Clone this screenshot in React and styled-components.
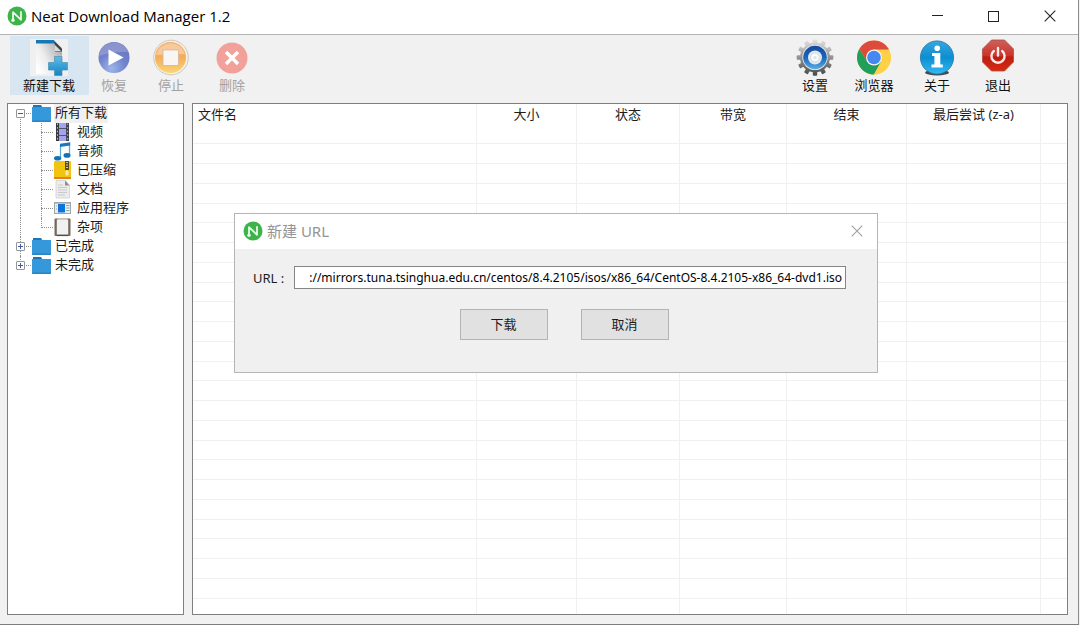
import React from "react";
import styled, { createGlobalStyle, css } from "styled-components";

const GlobalStyle = createGlobalStyle`
  * { box-sizing: border-box; }
  html, body { margin: 0; height: 100%; background: #f1f1f1; }
  body, button, input, table {
    font-family: "Noto Sans", "Noto Sans CJK SC", sans-serif;
    font-size: 13px;
    color: #1c1c1c;
  }
`;

const Window = styled.div`
  position: relative;
  display: flex;
  flex-direction: column;
  height: 100vh;
  margin-right: 1px;
  background: #f1f1f1;
  border-right: 1px solid #8c8c8c;
  border-bottom: 1px solid #7d7d7d;
`;

const TitleBar = styled.header`
  display: flex;
  align-items: center;
  height: 35px;
  flex: none;
  padding: 0 0 3px 7px;
  background: #fff;
  border-bottom: 1px solid #b4b4b4;
`;

const Title = styled.h1`
  flex: 1;
  margin: 0 0 0 4px;
  font-size: 15px;
  line-height: 24px;
  font-weight: 400;
  font-family: "Open Sans", sans-serif;
  color: #000;
`;

const WindowButton = styled.button`
  display: grid;
  place-items: center;
  width: 56px;
  height: 30px;
  padding: 0;
  border: 0;
  background: transparent;
`;

const Toolbar = styled.nav`
  display: flex;
  justify-content: space-between;
  flex: none;
  height: 68px;
  padding: 1px 52px 8px 10px;
`;

const ToolGroup = styled.div`
  display: grid;
  grid-template-columns: ${(p) => p.$columns};
`;

const ToolButton = styled.button`
  display: flex;
  flex-direction: column;
  align-items: center;
  padding: 3px 1px 0 0;
  border: 0;
  background: ${(p) => (p.$active ? "#d8e6f2" : "transparent")};
  color: #111;
  line-height: 18px;
  white-space: nowrap;
  &:disabled { color: #a2a2a2; }
  svg { display: block; flex: none; }
`;

const Content = styled.main`
  display: flex;
  flex: 1;
  min-height: 0;
  gap: 8px;
  padding: 0 10px 9px 7px;
`;

const panel = css`
  background: #fff;
  border: 1px solid #7f7f7f;
  overflow: hidden;
`;

const Sidebar = styled.aside`
  ${panel}
  flex: 0 0 177px;
`;

const TreeList = styled.ul`
  list-style: none;
  margin: 0;
  padding: 0;
`;

const TreeRow = styled.div`
  display: flex;
  align-items: center;
  height: 19px;
  white-space: nowrap;
  svg { display: block; flex: none; }
`;

const dots = "1px dotted #8f8f8f";

/* vertical guide: "all", "top" half, "bottom" half; $branch adds the arm to the row */
const Guide = styled.span`
  position: relative;
  flex: none;
  width: ${(p) => p.$width}px;
  height: 19px;
  &::before {
    content: "";
    position: absolute;
    left: 12px;
    top: ${(p) => (p.$line === "bottom" ? 10 : 0)}px;
    height: ${(p) => (p.$line === "all" ? 19 : 10)}px;
    border-left: ${dots};
  }
  &::after {
    content: "";
    position: absolute;
    left: 12px;
    right: 1px;
    top: 9px;
    border-top: ${(p) => (p.$branch ? dots : "0")};
  }
`;

const Expander = styled.button`
  position: absolute;
  z-index: 1;
  left: 8px;
  top: 5px;
  display: grid;
  place-items: center;
  width: 9px;
  height: 9px;
  padding: 0;
  border: 1px solid #969696;
  border-radius: 1px;
  background: #fff;
`;

const TreeLabel = styled.span`
  height: 19px;
  line-height: 17px;
  margin-left: ${(p) => (p.$child ? 4 : 3)}px;
  padding: 0 1px;
  background: ${(p) => (p.$selected ? "#f0f0f0" : "transparent")};
`;

const FilePanel = styled.section`
  ${panel}
  flex: 1;
  min-width: 0;
`;

const FileTable = styled.table`
  width: 100%;
  table-layout: fixed;
  border-collapse: separate;
  border-spacing: 0;
  th, td { padding: 0; border-right: 1px solid #f0f0f0; }
  th:last-child, td:last-child { border-right: 0; }
  th {
    height: 21px;
    line-height: 20px;
    padding-bottom: 1px;
    font-weight: 400;
    text-align: center;
    white-space: nowrap;
  }
  th:first-child { text-align: left; padding-left: 5px; }
  td { height: 20px; border-bottom: 1px solid #f0f0f0; }
  tr:nth-child(4n + 1) td { height: 19px; }
`;

const Dialog = styled.section`
  position: absolute;
  top: 213px;
  left: 234px;
  width: 644px;
  background: #f0f0f0;
  border: 1px solid #b5b5b5;
`;

const DialogTitle = styled.header`
  display: flex;
  align-items: center;
  gap: 4px;
  height: 35px;
  padding: 0 10px 2px 8px;
  background: #fff;
  h2 {
    flex: 1;
    margin: 0;
    font-size: 15px;
    line-height: 20px;
    font-weight: 400;
    color: #949494;
  }
`;

const CloseButton = styled.button`
  display: grid;
  place-items: center;
  width: 20px;
  height: 20px;
  padding: 0;
  border: 0;
  background: transparent;
`;

const DialogForm = styled.form`
  padding: 17px 31px 32px 18px;
`;

const Field = styled.div`
  display: flex;
  align-items: center;
  label { flex: 0 0 41px; line-height: 20px; white-space: nowrap; }
  input {
    flex: 1;
    min-width: 0;
    height: 23px;
    padding: 0 3px;
    border: 1px solid #858585;
    border-radius: 0;
    outline: 0;
    background: #fff;
    font-size: 12px;
    color: #000;
    text-align: right;
  }
`;

const Actions = styled.div`
  display: flex;
  justify-content: center;
  gap: 33px;
  padding: 20px 0 0 29px;
`;

const ActionButton = styled.button`
  width: 88px;
  height: 31px;
  padding: 0 0 2px;
  border: 1px solid #b3b3b3;
  background: #e1e1e1;
`;

const Logo = () => (
  <svg width="20" height="20" viewBox="0 0 20 20" aria-hidden="true">
    <circle cx="10" cy="10" r="9.5" fill="#3cb449" />
    <path d="M6 13V6.2L14 13.8V6" fill="none" stroke="#e9f8ea" strokeWidth="1.8" strokeLinejoin="round" strokeLinecap="round" />
    <circle cx="6" cy="14.2" r="1.7" fill="#e9f8ea" />
  </svg>
);

const Cross = ({ color, size = 12 }) => (
  <svg width={size} height={size} viewBox="0 0 12 12" aria-hidden="true">
    <path d="M.7.7 11.3 11.3M11.3.7.7 11.3" stroke={color} strokeWidth="1.1" fill="none" />
  </svg>
);

const Tile = ({ children }) => (
  <svg width="38" height="37" viewBox="0 0 38 37" aria-hidden="true">{children}</svg>
);

const NewIcon = () => (
  <Tile>
    <defs>
      <linearGradient id="page" x1="0" x2="1" y1=".8" y2=".2">
        <stop offset="0" stopColor="#ffffff" /><stop offset=".4" stopColor="#ededed" /><stop offset="1" stopColor="#a9a9a9" />
      </linearGradient>
      <linearGradient id="plus" x1="0" x2="0" y1="0" y2="1">
        <stop offset="0" stopColor="#5dbce8" /><stop offset="1" stopColor="#1584c2" />
      </linearGradient>
    </defs>
    <rect width="38" height="37" fill="#f0f0f0" />
    <path d="M6 4H25L32 11V35H6Z" fill="url(#page)" />
    <path d="M6 1H24L26 4.5H6Z" fill="#1778b5" />
    <path d="M24.5 2 32 9.5V12.5H25Z" fill="#3f4448" />
    <path d="M24.5 5.5V12H31Z" fill="#d9dcde" />
    <path d="M24.5 17.5H32V23.5H37.5V31H32V36.5H24.5V31H18.5V23.5H24.5Z" fill="url(#plus)" stroke="#4a8fb5" strokeWidth=".7" />
  </Tile>
);

const ResumeIcon = () => (
  <Tile>
    <defs>
      <radialGradient id="play" cx=".42" cy=".85" r=".9">
        <stop offset="0" stopColor="#9db6ea" /><stop offset=".5" stopColor="#7183cc" /><stop offset="1" stopColor="#6871ba" />
      </radialGradient>
    </defs>
    <circle cx="19" cy="18.5" r="15.5" fill="url(#play)" />
    <path d="M4 17A15 15 0 0 1 33 13Q20 12 4 17Z" fill="#a4abd8" opacity=".55" />
    <path d="M13.5 10.5 28.5 18.5 13.5 26.5Z" fill="#fff" />
  </Tile>
);

const StopIcon = () => (
  <Tile>
    <defs>
      <linearGradient id="stop" x1="0" x2="0" y1="0" y2="1">
        <stop offset="0" stopColor="#f2b26e" /><stop offset=".5" stopColor="#f5ad5c" /><stop offset="1" stopColor="#fbd675" />
      </linearGradient>
    </defs>
    <circle cx="19" cy="18.5" r="17.3" fill="#f5f1ea" stroke="#cfc8bc" strokeWidth="1" />
    <circle cx="18.5" cy="18.5" r="15.5" fill="url(#stop)" />
    <path d="M4 16A15 15 0 0 1 33 15Q18 15 4 16Z" fill="#f7cfaa" opacity=".8" />
    <rect x="11" y="11" width="15.5" height="15.5" fill="#f8f5f3" stroke="#d8b795" strokeWidth=".8" />
  </Tile>
);

const DeleteIcon = () => (
  <Tile>
    <circle cx="19" cy="19" r="15.5" fill="#f2a19a" />
    <path d="M13 13 25 25M25 13 13 25" stroke="#fff" strokeWidth="3.4" />
  </Tile>
);

const teeth = Array.from({ length: 12 }, (_, i) => i * 30);

const SettingsIcon = () => (
  <Tile>
    <defs>
      <linearGradient id="gear" x1="0" x2="0" y1="0" y2="1">
        <stop offset="0" stopColor="#e6e6e6" /><stop offset=".45" stopColor="#9a9a9a" /><stop offset="1" stopColor="#484848" />
      </linearGradient>
      <linearGradient id="ring" x1="0" x2="0" y1="0" y2="1">
        <stop offset="0" stopColor="#15499a" /><stop offset=".5" stopColor="#1c66b8" /><stop offset="1" stopColor="#5aaee6" />
      </linearGradient>
    </defs>
    <mask id="gearmask">
      <circle cx="19" cy="18.5" r="15" fill="#fff" />
      {teeth.map((a) => (
        <rect key={a} x="16.8" y=".2" width="4.4" height="6" rx="1" fill="#fff" transform={`rotate(${a} 19 18.5)`} />
      ))}
    </mask>
    <rect width="38" height="37" fill="url(#gear)" mask="url(#gearmask)" />
    <circle cx="19" cy="18.5" r="12.6" fill="#e4edf4" />
    <circle cx="19" cy="18.5" r="11.8" fill="url(#ring)" />
    <circle cx="19" cy="18.5" r="7" fill="#dfe9f1" />
    <circle cx="19" cy="18.5" r="4.4" fill="#fbfcfc" stroke="#cdd6dc" strokeWidth=".8" />
    <circle cx="19" cy="18.5" r="1.6" fill="#dfe3e6" />
  </Tile>
);

const ChromeIcon = () => (
  <Tile>
    <circle cx="19" cy="18.5" r="17" fill="#fdd046" />
    <path d="M4.3 10A17 17 0 0 1 33.7 10L33.8 10.7H19L12 22.5Z" fill="#de4b3d" />
    <path d="M4.3 10A17 17 0 0 0 19 35.5L26.2 22.5 12.3 22.8Z" fill="#1f9f57" />
    <path d="M26.2 22.5 19 35.5A17 17 0 0 0 33.8 10.7H19Z" fill="#fdd046" />
    <circle cx="19" cy="18.5" r="8" fill="#f5f6f5" />
    <circle cx="19" cy="18.5" r="6.8" fill="#4688f1" />
  </Tile>
);

const AboutIcon = () => (
  <Tile>
    <defs>
      <linearGradient id="info" x1="0" x2="0" y1="0" y2="1">
        <stop offset="0" stopColor="#3aa5dc" /><stop offset=".5" stopColor="#0b8fd2" /><stop offset="1" stopColor="#35b9ef" />
      </linearGradient>
    </defs>
    <ellipse cx="19" cy="33.5" rx="12" ry="3" fill="#4a4a4a" />
    <circle cx="19" cy="18.5" r="16.6" fill="url(#info)" stroke="#1b73ab" strokeWidth=".8" />
    <circle cx="19.2" cy="9.3" r="2.8" fill="#fff" />
    <path d="M14 14H22.3V25.5H24.8V28.5H13.5V25.5H16.4V17H14Z" fill="#fff" />
  </Tile>
);

const ExitIcon = () => (
  <Tile>
    <defs>
      <linearGradient id="exit" x1="0" x2="0" y1="0" y2="1">
        <stop offset="0" stopColor="#cc605b" /><stop offset=".5" stopColor="#cc352b" /><stop offset=".55" stopColor="#c01d10" /><stop offset="1" stopColor="#d62b10" />
      </linearGradient>
    </defs>
    <path d="M12.5 1H25.5L34.5 10V23L25.5 32H12.5L3.5 23V10Z" fill="url(#exit)" stroke="#b34a44" strokeWidth=".8" />
    <path d="M14.8 12A6.6 6.6 0 1 0 23.2 12" fill="none" stroke="#fbeceb" strokeWidth="2.4" strokeLinecap="round" />
    <path d="M19 9V16.5" stroke="#fbeceb" strokeWidth="2.4" strokeLinecap="round" />
  </Tile>
);

const Folder = () => (
  <svg width="19" height="19" viewBox="0 0 19 19" aria-hidden="true">
    <path d="M1 1H9L10.5 3.5V6H1Z" fill="#1e74b4" />
    <path d="M0 3H19V17Q19 18 18 18H1Q0 18 0 17Z" fill="#3498db" />
    <path d="M0 16.5H19V17Q19 18 18 18H1Q0 18 0 17Z" fill="#2a84c4" />
  </svg>
);

const Small = ({ children }) => (
  <svg width="18" height="19" viewBox="0 0 18 19" aria-hidden="true">{children}</svg>
);

const VideoIcon = () => (
  <Small>
    <rect x="2" y="0" width="13" height="18" fill="#38383f" />
    <path d="M5 0H12.2V5.3H5ZM5 6H12.2V12H5ZM5 12.7H12.2V18H5Z" fill="#a3a3ee" />
    <path d="M3.5 .5V18M13.7 .5V18" stroke="#bdbdc2" strokeWidth="1" strokeDasharray="1.6 2" />
  </Small>
);

const AudioIcon = () => (
  <Small>
    <path d="M6.5 15.5V3L15.5 1.5V13" fill="none" stroke="#5aaee0" strokeWidth="1.3" />
    <path d="M6 1.8 16.2.2V3.5L6 5Z" fill="#1d78bb" />
    <ellipse cx="3.6" cy="16.2" rx="3.6" ry="2.3" fill="#1471b5" />
    <ellipse cx="13" cy="13.4" rx="3.5" ry="2.3" fill="#1471b5" />
  </Small>
);

const ZipIcon = () => (
  <Small>
    <rect x="0" y="0" width="17" height="18" rx="1" fill="#f1c40f" />
    <path d="M0 16H17V17Q17 18 16 18H1Q0 18 0 17Z" fill="#e67e22" />
    <rect x="11" y="0" width="4" height="9" fill="#5a4b24" />
    <path d="M12 1.5H14M12 4H14M12 6.5H14" stroke="#d4c8a0" />
    <rect x="11.5" y="9.5" width="3" height="5" rx="1" fill="#f7e9b6" />
  </Small>
);

const DocIcon = () => (
  <Small>
    <path d="M2 .5H11.5L15.5 5V18H2Z" fill="#ececec" stroke="#d0d0d0" strokeWidth=".8" />
    <path d="M11 .5V5.5H15.5Z" fill="#8e8e8e" />
    <path d="M4 5H9M4 7.5H13M4 10H13M4 12.5H13M4 15H11" stroke="#c2c2c2" strokeWidth=".8" />
  </Small>
);

const AppIcon = () => (
  <Small>
    <rect x=".5" y="3.5" width="16" height="11" fill="#ececec" stroke="#9fa5a9" />
    <path d="M1 4.5H16" stroke="#bcc3c8" />
    <rect x="4" y="5" width="7" height="8.5" fill="#0c74d8" />
    <path d="M12 6.5H15.5M12 9H15.5M12 11.5H15.5M2 7H3M2 10H3" stroke="#90a7b8" />
  </Small>
);

const MiscIcon = () => (
  <Small>
    <rect x=".5" y=".5" width="16" height="17.5" rx="1" fill="#75695f" />
    <rect x="2.8" y="1.5" width="11.4" height="15" fill="#f1f1f1" />
    <path d="M4 1.2H13" stroke="#cfcac4" strokeWidth="1.6" />
    <path d="M3 17.6H14" stroke="#54493f" strokeWidth="1" />
  </Small>
);

const mainTools = [
  { label: "新建下载", Icon: NewIcon, active: true },
  { label: "恢复", Icon: ResumeIcon, disabled: true },
  { label: "停止", Icon: StopIcon, disabled: true },
  { label: "删除", Icon: DeleteIcon, disabled: true },
];

const appTools = [
  { label: "设置", Icon: SettingsIcon },
  { label: "浏览器", Icon: ChromeIcon },
  { label: "关于", Icon: AboutIcon },
  { label: "退出", Icon: ExitIcon },
];

const categories = [
  { label: "视频", Icon: VideoIcon },
  { label: "音频", Icon: AudioIcon },
  { label: "已压缩", Icon: ZipIcon },
  { label: "文档", Icon: DocIcon },
  { label: "应用程序", Icon: AppIcon },
  { label: "杂项", Icon: MiscIcon },
];

const columns = [
  { label: "文件名", width: 284 },
  { label: "大小", width: 100 },
  { label: "状态", width: 103 },
  { label: "带宽", width: 107 },
  { label: "结束", width: 120 },
  { label: "最后尝试 (z-a)", width: 134 },
  { label: "" },
];

const emptyRows = Array.from({ length: 25 }, (_, i) => i);

const Tools = ({ items, columns: tracks }) => (
  <ToolGroup $columns={tracks}>
    {items.map(({ label, Icon, active, disabled }) => (
      <ToolButton key={label} type="button" $active={active} disabled={disabled}>
        <Icon />
        {label}
      </ToolButton>
    ))}
  </ToolGroup>
);

const Root = ({ label, line, open, selected, children }) => (
  <li>
    <TreeRow>
      <Guide $width={24} $line={line} $branch>
        <Expander type="button" aria-expanded={!!open} aria-label={label}>
          <svg width="7" height="7" viewBox="0 0 7 7" aria-hidden="true">
            <path d={open ? "M1 3.5H6" : "M1 3.5H6M3.5 1V6"} stroke="#3c5aa8" />
          </svg>
        </Expander>
      </Guide>
      <Folder />
      <TreeLabel $selected={selected}>{label}</TreeLabel>
    </TreeRow>
    {children}
  </li>
);

export default function App() {
  return (
    <>
      <GlobalStyle />
      <Window>
        <TitleBar>
          <Logo />
          <Title>Neat Download Manager 1.2</Title>
          <WindowButton type="button" aria-label="Minimize">
            <svg width="12" height="12" viewBox="0 0 12 12" aria-hidden="true"><path d="M0 5.5H11" stroke="#222" /></svg>
          </WindowButton>
          <WindowButton type="button" aria-label="Maximize">
            <svg width="12" height="12" viewBox="0 0 12 12" aria-hidden="true"><rect x=".5" y="1.5" width="10" height="10" fill="none" stroke="#222" /></svg>
          </WindowButton>
          <WindowButton type="button" aria-label="Close"><Cross color="#222" /></WindowButton>
        </TitleBar>

        <Toolbar>
          <Tools items={mainTools} columns="79px 51px 63px 59px" />
          <Tools items={appTools} columns="59px 59px 67px 55px" />
        </Toolbar>

        <Content>
          <Sidebar>
            <TreeList>
              <Root label="所有下载" line="bottom" open selected>
                <TreeList>
                  {categories.map(({ label, Icon }, i) => (
                    <li key={label}>
                      <TreeRow>
                        <Guide $width={21} $line="all" />
                        <Guide $width={25} $line={i === categories.length - 1 ? "top" : "all"} $branch />
                        <Icon />
                        <TreeLabel $child>{label}</TreeLabel>
                      </TreeRow>
                    </li>
                  ))}
                </TreeList>
              </Root>
              <Root label="已完成" line="all" />
              <Root label="未完成" line="top" />
            </TreeList>
          </Sidebar>

          <FilePanel>
            <FileTable>
              <colgroup>
                {columns.map(({ label, width }) => <col key={label} width={width} />)}
              </colgroup>
              <thead>
                <tr>{columns.map(({ label }) => <th key={label} scope="col">{label}</th>)}</tr>
              </thead>
              <tbody>
                {emptyRows.map((row) => (
                  <tr key={row}>{columns.map(({ label }) => <td key={label} />)}</tr>
                ))}
              </tbody>
            </FileTable>
          </FilePanel>
        </Content>

        <Dialog role="dialog" aria-labelledby="dialog-title">
          <DialogTitle>
            <Logo />
            <h2 id="dialog-title">新建 URL</h2>
            <CloseButton type="button" aria-label="Close"><Cross color="#a0a0a0" /></CloseButton>
          </DialogTitle>
          <DialogForm onSubmit={(e) => e.preventDefault()}>
            <Field>
              <label htmlFor="url">URL :</label>
              <input
                id="url"
                type="text"
                defaultValue="://mirrors.tuna.tsinghua.edu.cn/centos/8.4.2105/isos/x86_64/CentOS-8.4.2105-x86_64-dvd1.iso"
              />
            </Field>
            <Actions>
              <ActionButton type="submit">下载</ActionButton>
              <ActionButton type="button">取消</ActionButton>
            </Actions>
          </DialogForm>
        </Dialog>
      </Window>
    </>
  );
}
